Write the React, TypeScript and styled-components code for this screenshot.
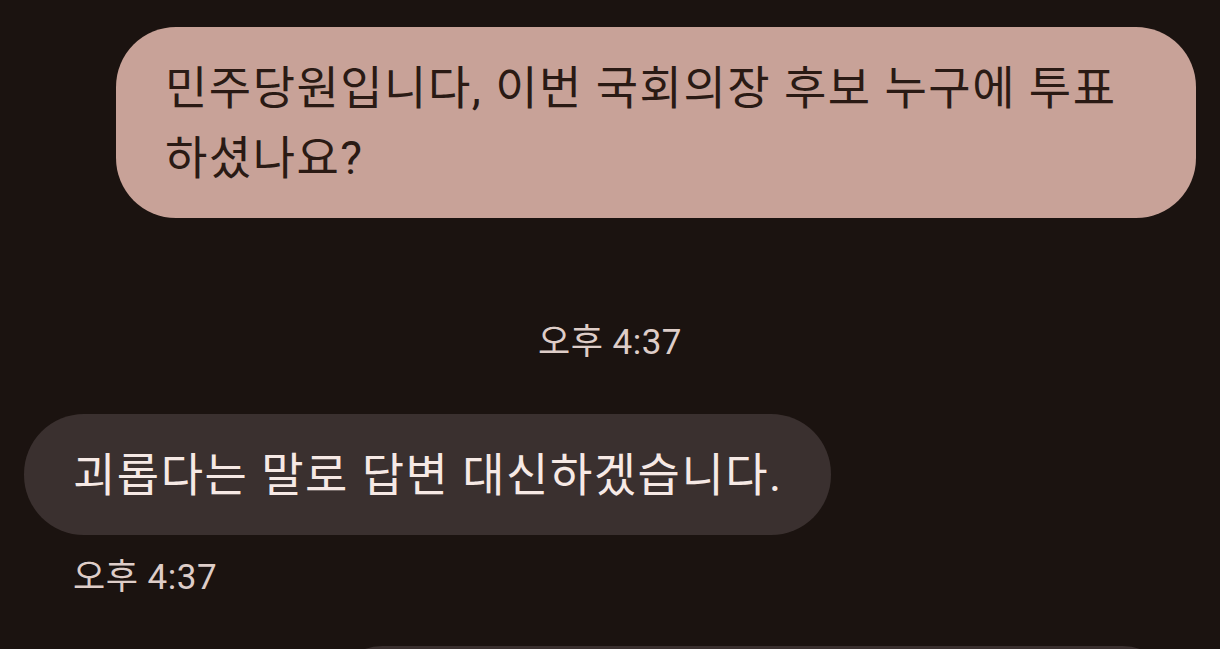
import React from "react";
import styled, { createGlobalStyle } from "styled-components";

const GlobalStyle = createGlobalStyle`
  html, body {
    margin: 0;
    padding: 0;
    background: #1b1310;
  }
  body {
    font-family: "Roboto", "Noto Sans CJK KR", sans-serif;
  }
`;

const ChatScreen = styled.div`
  height: 100vh;
  overflow: hidden;
  display: flex;
  flex-direction: column;
  padding: 27px 24px 0 24px;
  box-sizing: border-box;
`;

const Row = styled.div<{ $mine?: boolean; $gap?: number }>`
  display: flex;
  justify-content: ${(p) => (p.$mine ? "flex-end" : "flex-start")};
  margin-top: ${(p) => p.$gap ?? 0}px;
`;

const Bubble = styled.div<{ $mine?: boolean }>`
  max-width: 1080px;
  box-sizing: border-box;
  padding: 26px ${(p) => (p.$mine ? 30 : 48)}px 25px 49px;
  border-radius: 60px;
  font-size: 46px;
  letter-spacing: 1.5px;
  line-height: 70px;
  word-break: keep-all;
  background: ${(p) => (p.$mine ? "#c8a298" : "#3a302f")};
  color: ${(p) => (p.$mine ? "#2a1a14" : "#f6e9e5")};
  ${(p) => (p.$mine ? "width: 1080px;" : "")}
`;

const Stamp = styled.div<{ $center?: boolean; $gap: number }>`
  margin-top: ${(p) => p.$gap}px;
  padding-left: ${(p) => (p.$center ? 0 : 49)}px;
  text-align: ${(p) => (p.$center ? "center" : "left")};
  font-size: 35px;
  letter-spacing: 0.5px;
  line-height: 44px;
  color: #decdc8;
`;

const PeekBubble = styled.div`
  width: 841px;
  height: 120px;
  margin-right: 23px;
  border-radius: 50px;
  background: #3a302f;
`;

type Message = {
  id: number;
  mine: boolean;
  text: string;
};

const messages: Message[] = [
  { id: 1, mine: true, text: "민주당원입니다, 이번 국회의장 후보 누구에 투표 하셨나요?" },
  { id: 2, mine: false, text: "괴롭다는 말로 답변 대신하겠습니다." },
];

const App = () => {
  return (
    <>
      <GlobalStyle />
      <ChatScreen>
        <Row $mine>
          <Bubble $mine>{messages[0].text}</Bubble>
        </Row>
        <Stamp $center $gap={103}>
          오후 4:37
        </Stamp>
        <Row $gap={49}>
          <Bubble>{messages[1].text}</Bubble>
        </Row>
        <Stamp $gap={21}>오후 4:37</Stamp>
        <Row $mine $gap={46}>
          <PeekBubble />
        </Row>
      </ChatScreen>
    </>
  );
};

export default App;
